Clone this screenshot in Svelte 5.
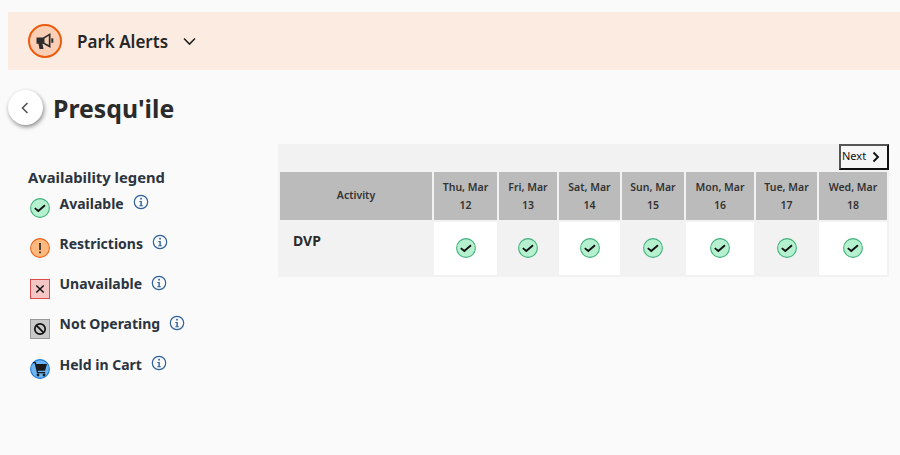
<script>
  const days = [
    ['Thu, Mar', '12', true], ['Fri, Mar', '13', false], ['Sat, Mar', '14', true], ['Sun, Mar', '15', false],
    ['Mon, Mar', '16', true], ['Tue, Mar', '17', false], ['Wed, Mar', '18', true]
  ];
  const legend = [
    { label: 'Available', kind: 'ok' },
    { label: 'Restrictions', kind: 'warn' },
    { label: 'Unavailable', kind: 'no' },
    { label: 'Not Operating', kind: 'closed' },
    { label: 'Held in Cart', kind: 'cart' }
  ];
</script>

{#snippet check()}
  <svg class="status" viewBox="0 0 20 20" width="20" height="20">
    <circle cx="10" cy="10" r="9.4" fill="#b5f0cf" stroke="#45b27e" stroke-width="1.1" />
    <path d="M4.8 10.100 8.300 13 15 7.200" fill="none" stroke="#111" stroke-width="1.8" />
  </svg>
{/snippet}

<div class="banner">
  <span class="horn">
    <svg viewBox="0 0 18 18" width="18" height="18">
      <path d="M0.500 5.500H7L14.500 1V16L7 11.800H6.500L7.500 17H3.500L2.500 11.800H0.500Z" fill="#2d2d2d" />
      <path d="M8.500 6.400 12.800 3.800V13.100L8.500 10.800Z" fill="#fbcfb5" />
      <rect x="15.300" y="6.300" width="2" height="4.500" fill="#2d2d2d" />
    </svg>
  </span>
  <span class="alerts">Park Alerts</span>
  <svg class="chev" viewBox="0 0 13 9" width="13" height="9"><path d="M1 1.500 6.500 7 12 1.500" fill="none" stroke="#222" stroke-width="1.600" /></svg>
</div>

<div class="heading">
  <button class="back" aria-label="Back">
    <svg viewBox="0 0 10 14" width="10" height="14"><path d="M7.500 2 2.500 7l5 5" fill="none" stroke="#555" stroke-width="1.600" /></svg>
  </button>
  <h1>Presqu'ile</h1>
</div>

<div class="main">
  <aside>
    <h2>Availability legend</h2>
    {#each legend as item}
      <div class="item">
        <span class="ico">
          {#if item.kind === 'ok'}
            {@render check()}
          {:else if item.kind === 'warn'}
            <svg viewBox="0 0 20 20" width="20" height="20">
              <circle cx="10" cy="10" r="9.400" fill="#fdb97d" stroke="#e8641a" stroke-width="1.100" />
              <rect x="9.200" y="5" width="1.600" height="7" fill="#222" />
              <rect x="9.200" y="13.400" width="1.600" height="1.800" fill="#222" />
            </svg>
          {:else if item.kind === 'no'}
            <svg viewBox="0 0 20 20" width="20" height="20">
              <rect x="0.500" y="0.500" width="19" height="19" fill="#f5c6c6" stroke="#dc4c4c" />
              <path d="M6.300 6.500 13.700 13.500M13.700 6.500 6.300 13.500" stroke="#111" stroke-width="1.500" />
            </svg>
          {:else if item.kind === 'closed'}
            <svg viewBox="0 0 20 20" width="20" height="20">
              <rect x="0.500" y="0.500" width="19" height="19" fill="#c9c9c9" stroke="#999" />
              <circle cx="10" cy="10" r="5.200" fill="none" stroke="#111" stroke-width="1.700" />
              <path d="M6.400 6.400 13.600 13.600" stroke="#111" stroke-width="1.700" />
            </svg>
          {:else}
            <svg viewBox="0 0 20 20" width="20" height="20">
              <circle cx="10" cy="10" r="9.400" fill="#6db5f2" stroke="#1f7ad1" stroke-width="1.100" />
              <path d="M3 3h2.700l.7 2H17l-1.900 6.800H7.800l.4 1.200h7v1.300H7L4.600 4.300H3Z" fill="#1b1b1b" />
              <circle cx="8" cy="16" r="1.400" fill="#1b1b1b" />
              <circle cx="14" cy="16" r="1.400" fill="#1b1b1b" />
            </svg>
          {/if}
        </span>
        <span class="label">{item.label}</span>
        <svg class="info" viewBox="0 0 16 16" width="16" height="16">
          <circle cx="8" cy="8" r="6.700" fill="none" stroke="#2f6199" stroke-width="1.200" />
          <rect x="7.200" y="3.800" width="1.700" height="1.700" fill="#2f6199" />
          <path d="M6.300 7h2.500v4.200h1v1H6.300v-1h1.100V8H6.300Z" fill="#2f6199" />
        </svg>
      </div>
    {/each}
  </aside>

  <section class="panel">
    <div class="pager">
      <button class="next">Next <svg viewBox="0 0 10 12" width="10" height="12"><path d="M2.500 1.500 7 6l-4.500 4.500" fill="none" stroke="#111" stroke-width="1.900" /></svg></button>
    </div>
    <table>
      <colgroup>
        <col class="c0" /><col class="c1" /><col class="c2" /><col class="c3" /><col class="c4" /><col class="c5" /><col class="c6" /><col class="c7" />
      </colgroup>
      <thead>
        <tr>
          <th>Activity</th>
          {#each days as d}
            <th>{d[0]}<br />{d[1]}</th>
          {/each}
        </tr>
      </thead>
      <tbody>
        <tr>
          <td class="name">DVP</td>
          {#each days as d}
            <td class="cell" class:white={d[2]}>{@render check()}</td>
          {/each}
        </tr>
      </tbody>
    </table>
  </section>
</div>

<style>
  :global(body) {
    background: #fafafa;
    font-family: "Noto Sans", "Open Sans", sans-serif;
    color: #2b2b2b;
    height: 455px;
    overflow: hidden;
  }
  .banner {
    margin: 12px 0 0 8px;
    height: 58px;
    background: #fcebe1;
    display: flex;
    align-items: center;
    padding-left: 20px;
  }
  .horn {
    box-sizing: border-box;
    width: 34px;
    height: 34px;
    border-radius: 50%;
    border: 2px solid #ea5b0c;
    background: #fbcfb5;
    display: flex;
    align-items: center;
    justify-content: center;
  }
  .alerts {
    font-size: 17px;
    font-weight: 600;
    margin-left: 15px;
    color: #262626;
  }
  .chev { margin-left: 15px; }
  .heading {
    display: flex;
    align-items: center;
    margin: 20px 0 0 8px;
    height: 35px;
  }
  .back {
    width: 35px;
    height: 35px;
    border-radius: 50%;
    border: 0;
    padding: 0 2px 0 0;
    background: #fff;
    box-shadow: 1px 2px 4px rgba(0, 0, 0, 0.45);
    display: flex;
    align-items: center;
    justify-content: center;
  }
  h1 {
    margin: 0 0 0 10px;
    font-size: 24.800px;
    font-weight: 700;
    color: #2b2b2b;
  }
  .main {
    display: flex;
    margin-top: 19px;
  }
  aside {
    padding: 22px 0 0 28px;
    flex: none;
    width: 250px;
  }
  h2 {
    margin: 0 0 5px;
    font-size: 14.800px;
    line-height: 22px;
    font-weight: 700;
    color: #2b3440;
  }
  .item {
    display: flex;
    align-items: flex-start;
    height: 40.300px;
    font-size: 14px;
    font-weight: 700;
    color: #2b3440;
  }
  .ico {
    width: 20px;
    height: 20px;
    margin: 5px 0 0 2px;
  }
  .ico svg { display: block; }
  .label {
    margin-left: 9.500px;
    line-height: 20px;
    padding-top: 0.600px;
  }
  .info { margin-left: 9px; margin-top: 1px; }
  .panel {
    width: 611px;
    flex: none;
    background: #f2f2f2;
    align-self: flex-start;
  }
  .pager {
    display: flex;
    justify-content: flex-end;
    height: 26px;
  }
  .next {
    box-sizing: border-box;
    width: 50px;
    height: 26px;
    border: 2px solid #111;
    border-color: #555 #111 #111 #555;
    background: #f7f7f7;
    padding: 0 0 3px 1px;
    font: 400 11px "Noto Sans", sans-serif;
    color: #111;
    display: flex;
    align-items: center;
    justify-content: flex-start;
    gap: 5px;
  }
  .next svg { margin-top: 2px; }
  table {
    table-layout: fixed;
    border-collapse: separate;
    border-spacing: 2px;
    width: 611px;
  }
  .c0 { width: 152px; }
  .c1 { width: 63px; }
  .c2 { width: 58px; }
  .c3 { width: 61px; }
  .c4 { width: 62px; }
  .c5 { width: 68px; }
  .c6 { width: 61px; }
  .c7 { width: 68px; }
  th {
    background: #bbbbbb;
    height: 48px;
    padding: 0;
    font-size: 10.500px;
    line-height: 18px;
    font-weight: 600;
    color: #333;
    text-align: center;
  }
  th:first-child { padding-bottom: 2px; height: 46px; }
  td { padding: 0; height: 53px; }
  .name {
    font-size: 14px;
    font-weight: 700;
    vertical-align: top;
    padding: 9px 0 0 13px;
    height: 44px;
  }
  .cell {
    text-align: center;
    vertical-align: middle;
    height: 52px;
    padding-bottom: 1px;
  }
  .cell .status { display: block; margin: 0 auto; }
  .white { background: #fff; }
</style>
